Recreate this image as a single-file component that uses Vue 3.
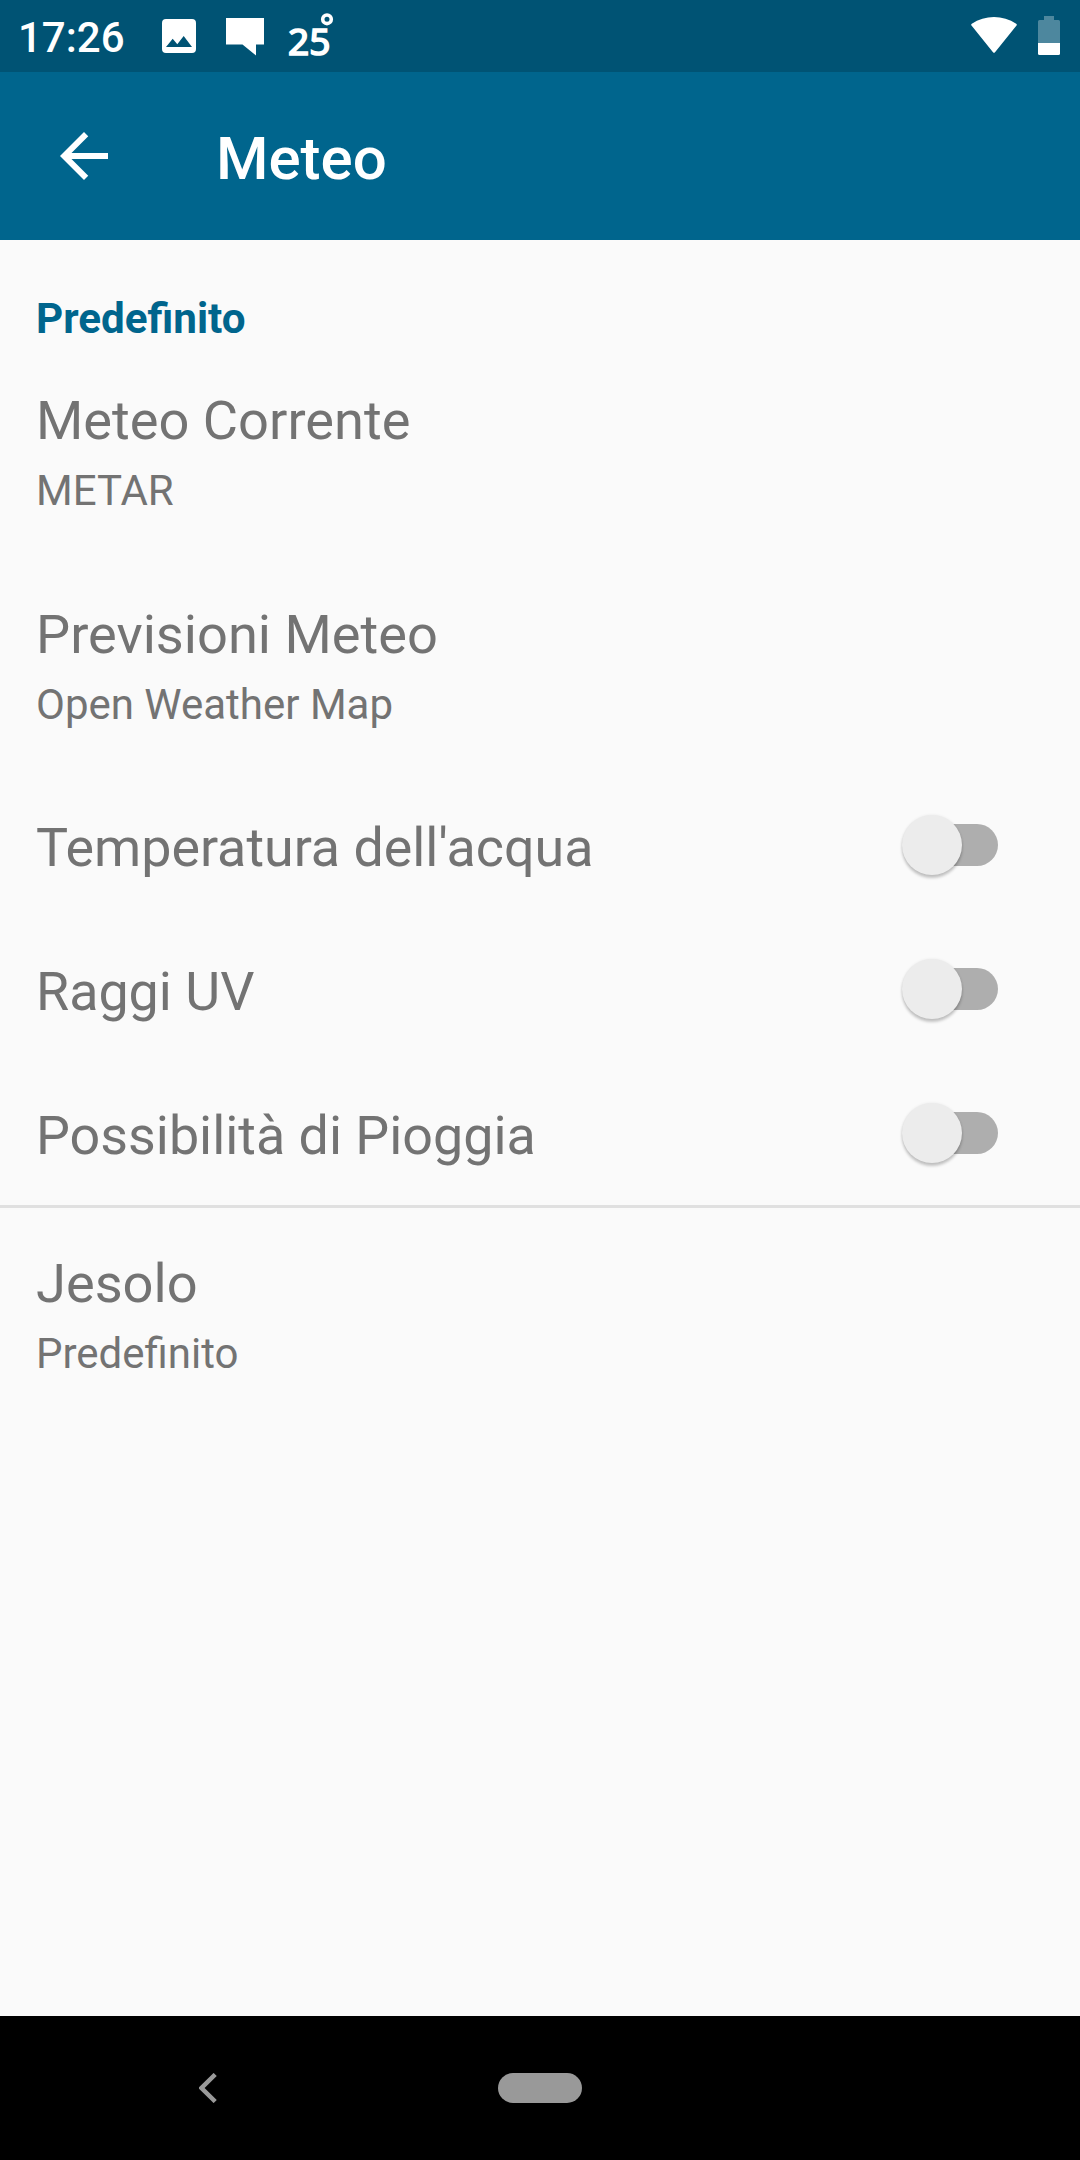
<template>
  <div class="screen">
    <header class="status-bar">
      <span class="clock">17:26</span>
      <svg class="icon-image" viewBox="0 0 34 34">
        <path
          fill-rule="evenodd"
          d="M4 0h26a4 4 0 0 1 4 4v26a4 4 0 0 1-4 4H4a4 4 0 0 1-4-4V4a4 4 0 0 1 4-4zM4 28h26l-8.300-11-6.400 8.300-4.600-5.600z"
        />
      </svg>
      <svg class="icon-chat" viewBox="0 0 38 38">
        <path d="M0 0h38v26.500h-8V37.500L16.500 26.500H0z" />
      </svg>
      <svg class="icon-temp" viewBox="0 0 54 72">
        <text x="0" y="54.500">25</text>
        <circle cx="39" cy="19.300" r="4.300" />
      </svg>
      <span class="spacer" />
      <svg class="icon-wifi" viewBox="0 0 46 36">
        <path d="M0.500 8.500Q-.3 7.500.8 6.800C14-2.200 32-2.200 45.200 6.800q1.100.7.300 1.700L24 35.200q-1 1.200-2 0z" />
      </svg>
      <svg class="icon-battery" viewBox="0 0 22 39">
        <path class="empty" d="M6 0h10v4h4.500A1.500 1.500 0 0 1 22 5.500V27H0V5.500A1.500 1.500 0 0 1 1.500 4H6z" />
        <path d="M0 27h22v10.500a1.500 1.500 0 0 1-1.500 1.500h-19A1.500 1.500 0 0 1 0 37.500z" />
      </svg>
    </header>

    <div class="app-bar">
      <button class="back" aria-label="Indietro">
        <svg viewBox="0 0 24 24">
          <path d="M20 11H7.830l5.590-5.590L12 4l-8 8 8 8 1.410-1.410L7.830 13H20z" />
        </svg>
      </button>
      <h1>Meteo</h1>
    </div>

    <main class="content">
      <h2>Predefinito</h2>
      <div v-for="item in sources" :key="item.title" class="row">
        <span class="title">{{ item.title }}</span>
        <span class="summary">{{ item.summary }}</span>
      </div>
      <div
        v-for="option in options"
        :key="option.title"
        class="row option"
        @click="option.on = !option.on"
      >
        <span class="title">{{ option.title }}</span>
        <span class="switch" :class="{ on: option.on }">
          <span class="thumb" />
        </span>
      </div>
      <div class="divider" />
      <div v-for="place in places" :key="place.title" class="row">
        <span class="title">{{ place.title }}</span>
        <span class="summary">{{ place.summary }}</span>
      </div>
    </main>

    <nav class="nav-bar">
      <svg class="nav-back" viewBox="0 0 18 30">
        <path d="M16.200 1.500L2.500 15l13.700 13.500" />
      </svg>
      <span class="home" />
    </nav>
  </div>
</template>

<script setup>
import { reactive } from 'vue';

const sources = [
  { title: 'Meteo Corrente', summary: 'METAR' },
  { title: 'Previsioni Meteo', summary: 'Open Weather Map' },
];

const options = reactive([
  { title: "Temperatura dell'acqua", on: false },
  { title: 'Raggi UV', on: false },
  { title: 'Possibilità di Pioggia', on: false },
]);

const places = [{ title: 'Jesolo', summary: 'Predefinito' }];
</script>

<style>
body {
  margin: 0;
}
</style>

<style scoped>
.screen {
  display: flex;
  flex-direction: column;
  width: 1080px;
  height: 2160px;
  overflow: hidden;
  background: #fafafa;
  color: #737373;
  font-family: Roboto, sans-serif;
}

svg {
  display: block;
  flex-shrink: 0;
  fill: #fff;
}

.status-bar {
  display: flex;
  align-items: flex-start;
  box-sizing: border-box;
  height: 72px;
  padding: 0 20px 0 18px;
  background: #005374;
}

.clock {
  width: 144px;
  margin-top: 13px;
  color: #fff;
  font-size: 42px;
  font-weight: 500;
  line-height: 50px;
}

.icon-image {
  width: 34px;
  height: 34px;
  margin-top: 19px;
}

.icon-chat {
  width: 38px;
  height: 38px;
  margin: 18px 0 0 30px;
}

.icon-temp {
  width: 54px;
  height: 72px;
  margin-left: 24px;
}

.icon-temp text {
  font-family: 'Noto Sans', sans-serif;
  font-size: 37px;
  stroke: #fff;
  stroke-width: 1.700;
}

.icon-temp circle {
  fill: none;
  stroke: #fff;
  stroke-width: 3.600;
}

.spacer {
  flex: 1;
}

.icon-wifi {
  width: 46px;
  height: 36px;
  margin-top: 17px;
}

.icon-battery {
  width: 22px;
  height: 39px;
  margin: 16px 0 0 21px;
}

.icon-battery .empty {
  fill-opacity: 0.3;
}

.app-bar {
  display: flex;
  align-items: center;
  height: 168px;
  padding-left: 48px;
  background: #00658d;
}

.back {
  width: 72px;
  height: 72px;
  padding: 0;
  border: none;
  background: transparent;
  cursor: pointer;
}

h1 {
  margin: 5px 0 0 96px;
  color: #fff;
  font-size: 60px;
  font-weight: 500;
  line-height: 72px;
}

.content {
  flex: 1;
}

h2 {
  box-sizing: border-box;
  height: 105px;
  margin: 0;
  padding: 54px 36px 0;
  color: #00658d;
  font-size: 42.200px;
  font-weight: 700;
  line-height: 50px;
}

.row {
  display: flex;
  flex-direction: column;
  gap: 13px;
  box-sizing: border-box;
  height: 214px;
  padding: 44px 36px 0;
}

.title {
  font-size: 54.200px;
  line-height: 64px;
}

.summary {
  font-size: 42px;
  line-height: 50px;
}

.row.option {
  flex-direction: row;
  align-items: center;
  justify-content: space-between;
  height: 144px;
  padding: 0 82px 0 36px;
  cursor: pointer;
}

.option .title {
  padding-top: 6px;
  font-size: 53.800px;
}

.switch {
  display: flex;
  align-items: center;
  width: 90px;
  height: 42px;
  border-radius: 21px;
  background: #aeaeae;
}

.thumb {
  flex-shrink: 0;
  width: 60px;
  height: 60px;
  margin-left: -6px;
  border-radius: 50%;
  background: #ececec;
  box-shadow: 0 3px 3px rgba(0, 0, 0, 0.22), 0 0 3px rgba(0, 0, 0, 0.08);
}

.switch.on {
  background: #7fb2c6;
}

.switch.on .thumb {
  margin-left: 36px;
  background: #00658d;
}

.divider {
  height: 3px;
  background: #e0e0e0;
}

.nav-bar {
  display: flex;
  align-items: center;
  height: 144px;
  padding-left: 199px;
  background: #000;
}

.nav-back {
  width: 18px;
  height: 30px;
  fill: none;
  stroke: #999;
  stroke-width: 4.500;
}

.home {
  width: 84px;
  height: 30px;
  margin-left: 281px;
  border-radius: 15px;
  background: #999;
}
</style>
